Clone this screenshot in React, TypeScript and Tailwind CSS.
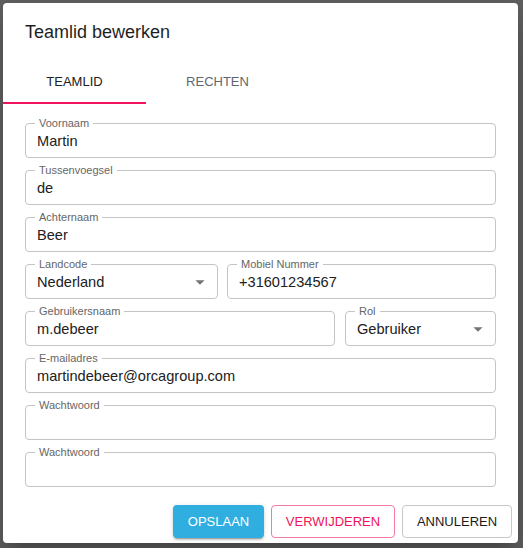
import React from 'react';

const font = { fontFamily: '"Liberation Sans", Arial, sans-serif' };

function ArrowDrop() {
  return (
    <svg viewBox="0 0 24 24" className="w-[22px] h-[22px] fill-[#757575]">
      <path d="M7 10l5 5 5-5z" />
    </svg>
  );
}

function Field({
  label,
  value,
  select,
  className = '',
}: {
  label: string;
  value?: string;
  select?: boolean;
  className?: string;
}) {
  return (
    <div
      className={`relative h-[35px] border border-[#c4c4c4] rounded-[4px] flex items-center pl-[11px] pr-[6px] ${className}`}
    >
      <span className="absolute -top-[8px] left-[9px] px-[4px] bg-white text-[11px] leading-[14px] text-[#666666]">
        {label}
      </span>
      <span className="flex-1 text-[14.6px] text-[#212121] leading-[18px] pt-[1px]">{value}</span>
      {select && <ArrowDrop />}
    </div>
  );
}

export default function App() {
  return (
    <div className="w-[523px] h-[548px] bg-[#5e5e5e] pt-[3px] pl-[3px] overflow-hidden" style={font}>
      <div className="w-[515px] h-[540px] bg-white rounded-[4px] shadow-[0_11px_15px_-7px_rgba(0,0,0,0.2),0_24px_38px_3px_rgba(0,0,0,0.14)] flex flex-col">
        {/* Title */}
        <div className="h-[57px] pt-[17px] px-[22px]">
          <h2 className="text-[18px] leading-[24px] text-[#1f1f1f]">Teamlid bewerken</h2>
        </div>

        {/* Tabs */}
        <div className="flex h-[44px]">
          <div className="relative w-[143px] flex items-center justify-center text-[13px] font-medium text-[#212121]">
            TEAMLID
            <span className="absolute bottom-0 left-0 right-0 h-[2px] bg-[#f0125a]" />
          </div>
          <div className="w-[143px] flex items-center justify-center text-[13px] font-medium text-[#5f6670]">
            RECHTEN
          </div>
        </div>

        {/* Form */}
        <div className="px-[22px] pt-[19px] flex flex-col gap-3">
          <Field label="Voornaam" value="Martin" />
          <Field label="Tussenvoegsel" value="de" />
          <Field label="Achternaam" value="Beer" />
          <div className="flex gap-[9px]">
            <Field label="Landcode" value="Nederland" select className="w-[193px]" />
            <Field label="Mobiel Nummer" value="+31601234567" className="flex-1" />
          </div>
          <div className="flex gap-[10px]">
            <Field label="Gebruikersnaam" value="m.debeer" className="flex-1" />
            <Field label="Rol" value="Gebruiker" select className="w-[151px]" />
          </div>
          <Field label="E-mailadres" value="martindebeer@orcagroup.com" />
          <Field label="Wachtwoord" />
          <Field label="Wachtwoord" />
        </div>

        {/* Actions */}
        <div className="flex justify-end gap-[7px] pr-[6px] mt-[18px]">
          <button className="w-[91px] h-[33px] rounded-[4px] bg-[#30aee0] text-white text-[13px] shadow-[0_3px_1px_-2px_rgba(0,0,0,0.2),0_2px_2px_0_rgba(0,0,0,0.14),0_1px_5px_0_rgba(0,0,0,0.12)]">
            OPSLAAN
          </button>
          <button className="w-[124px] h-[33px] rounded-[4px] border border-[#f47ba0] text-[#f0125a] text-[13px]">
            VERWIJDEREN
          </button>
          <button className="w-[110px] h-[33px] rounded-[4px] border border-[#c8c8c8] text-[#1a1a1a] text-[13px]">
            ANNULEREN
          </button>
        </div>
      </div>
    </div>
  );
}
